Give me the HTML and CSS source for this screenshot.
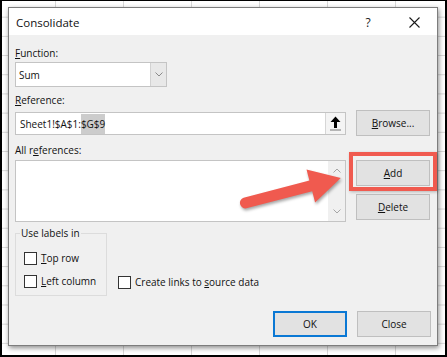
FILE: index.html
```html
<!DOCTYPE html>
<html>
<head>
<meta charset="utf-8">
<title>Consolidate</title>
<link rel="stylesheet" href="styles.css">
</head>
<body>
<div class="screen">
  <div class="dialog">
    <div class="titlebar">
      <span class="title">Consolidate</span>
      <span class="help">?</span>
      <span class="close-x"><svg width="11" height="11" viewBox="0 0 11 11"><path d="M0.5 0.5 L10.5 10.5 M10.5 0.5 L0.5 10.5" stroke="#1a1a1a" stroke-width="1.1" fill="none"/></svg></span>
    </div>
    <div class="body">
      <div class="label lbl-function"><u>F</u>unction:</div>
      <div class="combo">
        <span class="combo-text">Sum</span>
        <span class="combo-btn"><svg width="8" height="5" viewBox="0 0 8 5"><path d="M0.5 0.5 L4 4 L7.5 0.5" stroke="#8a8a8a" stroke-width="1" fill="none"/></svg></span>
      </div>
      <div class="label lbl-reference"><u>R</u>eference:</div>
      <div class="row ref-row">
        <div class="textbox">
          <span class="tb-text">Sheet1!$A$1:<span class="sel">$G$9</span></span>
          <span class="collapse-btn"><svg width="11" height="15" viewBox="0 0 11 15"><path d="M5.5 0.5 L10.5 6 L7 6 L7 12 L4 12 L4 6 L0.5 6 Z" fill="#000"/><rect x="0" y="13.5" width="11" height="1" fill="#777"/></svg></span>
        </div>
        <button class="btn"><u>B</u>rowse...</button>
      </div>
      <div class="label lbl-all">All r<u>e</u>ferences:</div>
      <div class="row list-row">
        <div class="listbox">
          <div class="list-area"></div>
          <div class="scrollbar">
            <svg width="8" height="5" viewBox="0 0 8 5"><path d="M0.5 4.5 L4 1 L7.5 4.5" stroke="#a6a6a6" stroke-width="1" fill="none"/></svg>
            <svg width="8" height="5" viewBox="0 0 8 5"><path d="M0.5 0.5 L4 4 L7.5 0.5" stroke="#a6a6a6" stroke-width="1" fill="none"/></svg>
          </div>
        </div>
        <div class="btn-col">
          <button class="btn"><u>A</u>dd</button>
          <button class="btn"><u>D</u>elete</button>
        </div>
      </div>
      <div class="row options-row">
        <fieldset class="group">
          <legend>Use labels in</legend>
          <div class="check first"><span class="box"></span><span><u>T</u>op row</span></div>
          <div class="check"><span class="box"></span><span><u>L</u>eft column</span></div>
        </fieldset>
        <div class="check links"><span class="box"></span><span>Create links to <u>s</u>ource data</span></div>
      </div>
      <div class="row footer">
        <button class="btn btn-ok">OK</button>
        <button class="btn">Close</button>
      </div>
    </div>
  </div>
  <div class="highlight"></div>
  <svg class="arrow" width="114" height="50" viewBox="234 164 114 50">
    <path d="M243.6 197.7 L309.4 180.6 L306.5 169.4 L340.8 178.1 L315.1 202.4 L312.2 191.2 L246.4 208.3 A5.5 5.5 0 0 1 243.6 197.7 Z" fill="#f05a4f"/>
  </svg>
</div>
</body>
</html>
```

FILE: styles.css
```css
* { box-sizing: border-box; }
html, body { margin: 0; padding: 0; }
body {
  width: 447px;
  height: 357px;
  overflow: hidden;
  font-family: "Open Sans", "Noto Sans", sans-serif;
  font-size: 10px;
  color: #111;
}
u { text-decoration: underline; text-underline-offset: 1px; }

.screen {
  position: relative;
  width: 447px;
  height: 357px;
  border: 2px solid #000;
  border-top-width: 1px;
  padding: 6px 0 0 6px;
  background-color: #fff;
  background-image:
    linear-gradient(to right, #d8d8d8 1px, transparent 1px),
    linear-gradient(to bottom, #d8d8d8 1px, transparent 1px);
  background-size: 68px 100%, 100% 19.2px;
  background-position: 53px 0, 0 15.7px;
}

.dialog {
  width: 430px;
  height: 339px;
  background: #f0f0f0;
  border: 1px solid #7d7d7d;
  box-shadow: 1px 2px 5px rgba(0,0,0,0.45);
  display: flex;
  flex-direction: column;
}

.titlebar {
  height: 27px;
  background: #fff;
  display: flex;
  align-items: center;
  padding-left: 7px;
  padding-top: 1px;
}
.title { flex: 1; font-size: 11.5px; color: #111; }
.help { width: 46px; text-align: center; font-size: 12px; color: #222; }
.close-x { width: 46px; display: flex; justify-content: center; align-items: center; }
.close-x svg { display: block; }

.body {
  display: flex;
  flex-direction: column;
  padding: 0 6px;
}
.label { height: 14px; line-height: 14px; }
.lbl-function { margin-top: 11px; }
.lbl-reference { margin-top: 6px; }
.lbl-all { margin-top: 7px; }

.row { display: flex; }

.combo {
  margin-top: 2px;
  width: 152px;
  height: 25px;
  background: #fff;
  border: 1px solid #c4c4c4;
  display: flex;
  align-items: stretch;
}
.combo-text { flex: 1; padding-left: 3px; display: flex; align-items: center; }
.combo-btn {
  width: 16px;
  background: #e8e8e8;
  border-left: 1px solid #d2d2d2;
  display: flex;
  align-items: center;
  justify-content: center;
}
.combo-btn svg { display: block; }

.ref-row { margin-top: 3px; gap: 10px; align-items: flex-start; }
.textbox {
  margin-top: 2px;
  width: 331px;
  height: 23px;
  background: #fff;
  border: 1px solid #c4c4c4;
  display: flex;
  align-items: stretch;
}
.tb-text { flex: 1; padding-left: 4px; display: flex; align-items: center; white-space: pre; }
.sel { background: #cccccc; padding: 3px 0; }
.collapse-btn {
  width: 20px;
  background: #f4f4f4;
  border-left: 1px solid #d6d6d6;
  display: flex;
  align-items: center;
  justify-content: center;
}
.collapse-btn svg { display: block; }

.btn {
  width: 74px;
  height: 26px;
  padding: 0;
  margin: 0;
  background: #e2e2e2;
  border: 1px solid #bfbfbf;
  font-family: inherit;
  font-size: 10px;
  color: #111;
}
.btn-ok { border-color: #0a78d4; box-shadow: inset 0 0 0 1px #0a78d4; }

.list-row { margin-top: 3px; gap: 10px; }
.listbox {
  width: 331px;
  height: 62px;
  background: #fff;
  border: 1px solid #c4c4c4;
  display: flex;
}
.list-area { flex: 1; }
.scrollbar {
  width: 17px;
  background: #f0f0f0;
  display: flex;
  flex-direction: column;
  justify-content: space-between;
  align-items: center;
  padding: 7px 0 7px;
}
.scrollbar svg { display: block; }
.btn-col { display: flex; flex-direction: column; gap: 8px; }

.options-row { margin-top: 4px; align-items: flex-end; }
.group {
  margin: 0;
  width: 92px;
  height: 70px;
  border: 1px solid #dcdcdc;
  padding: 0 0 0 8px;
  min-width: 0;
}
.group legend {
  padding: 0 1px;
  margin-left: -4px;
  line-height: 14px;
  height: 14px;
}
.check {
  display: flex;
  align-items: center;
  gap: 4px;
  height: 14px;
  white-space: nowrap;
}
.check.first { margin-top: 11px; margin-bottom: 9px; }
.box {
  width: 13px;
  height: 13px;
  background: #fff;
  border: 1px solid #333;
  flex: none;
}
.links { margin-left: 11px; margin-bottom: 7px; }

.footer { margin-top: 15px; justify-content: flex-end; gap: 10px; }

.highlight {
  position: absolute;
  left: 347px;
  top: 151px;
  width: 88px;
  height: 39px;
  border: 4px solid #f05a4f;
  box-shadow: 1px 1px 3px rgba(0,0,0,0.25);
}
.arrow {
  position: absolute;
  left: 232px;
  top: 163px;
  filter: drop-shadow(1px 2px 1.5px rgba(0,0,0,0.35));
}
```
